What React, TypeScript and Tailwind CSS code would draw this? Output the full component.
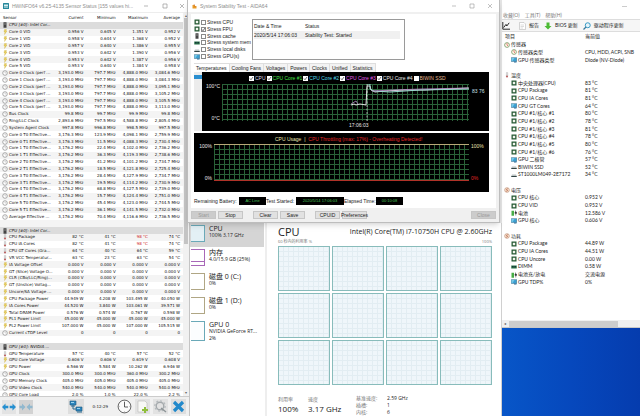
import type { ReactNode } from "react";

type SensorRow = [kind: string, name: string, current?: string, min?: string, max?: string, avg?: string];

const sensors: SensorRow[] = [
  ["group", "CPU [#0]: Intel Cor..."],
  ["volt", "Core 0 VID", "0.956 V", "0.645 V", "1.351 V", "0.952 V"],
  ["volt", "Core 1 VID", "0.958 V", "0.644 V", "1.368 V", "0.952 V"],
  ["volt", "Core 2 VID", "0.957 V", "0.640 V", "1.386 V", "0.955 V"],
  ["volt", "Core 3 VID", "0.953 V", "0.642 V", "1.390 V", "0.956 V"],
  ["volt", "Core 4 VID", "0.953 V", "0.642 V", "1.387 V", "0.956 V"],
  ["volt", "Core 5 VID", "0.953 V", "0.640 V", "1.384 V", "0.958 V"],
  ["clock", "Core 0 Clock (perf ...", "3,193.0 MHz", "797.7 MHz", "4,888.0 MHz", "3,084.6 MHz"],
  ["clock", "Core 1 Clock (perf ...", "3,193.0 MHz", "797.7 MHz", "4,888.0 MHz", "3,084.3 MHz"],
  ["clock", "Core 2 Clock (perf ...", "3,193.0 MHz", "797.7 MHz", "4,888.0 MHz", "3,095.1 MHz"],
  ["clock", "Core 3 Clock (perf ...", "3,193.0 MHz", "797.7 MHz", "4,888.0 MHz", "3,105.2 MHz"],
  ["clock", "Core 4 Clock (perf ...", "3,193.0 MHz", "797.7 MHz", "4,888.0 MHz", "3,105.5 MHz"],
  ["clock", "Core 5 Clock (perf ...", "3,193.0 MHz", "797.7 MHz", "4,888.0 MHz", "3,113.0 MHz"],
  ["clock", "Bus Clock", "99.8 MHz", "99.7 MHz", "99.9 MHz", "99.8 MHz"],
  ["clock", "Ring/LLC Clock", "2,893.6 MHz", "797.5 MHz", "4,588.8 MHz", "2,805.4 MHz"],
  ["clock", "System Agent Clock", "997.8 MHz", "996.8 MHz", "998.5 MHz", "997.5 MHz"],
  ["clock", "Core 0 T0 Effective...", "3,176.3 MHz", "123.9 MHz", "4,098.1 MHz", "2,759.9 MHz"],
  ["clock", "Core 0 T1 Effective...", "3,176.3 MHz", "11.5 MHz", "4,088.3 MHz", "2,730.4 MHz"],
  ["clock", "Core 1 T0 Effective...", "3,176.2 MHz", "22.4 MHz", "4,102.0 MHz", "2,736.2 MHz"],
  ["clock", "Core 1 T1 Effective...", "3,176.2 MHz", "36.3 MHz", "4,119.3 MHz", "2,738.6 MHz"],
  ["clock", "Core 2 T0 Effective...", "3,176.2 MHz", "41.2 MHz", "4,101.2 MHz", "2,734.7 MHz"],
  ["clock", "Core 2 T1 Effective...", "3,176.2 MHz", "18.5 MHz", "4,121.8 MHz", "2,725.4 MHz"],
  ["clock", "Core 3 T0 Effective...", "3,176.2 MHz", "28.4 MHz", "4,127.9 MHz", "2,734.7 MHz"],
  ["clock", "Core 3 T1 Effective...", "3,176.2 MHz", "19.5 MHz", "4,114.2 MHz", "2,730.9 MHz"],
  ["clock", "Core 4 T0 Effective...", "3,176.2 MHz", "68.8 MHz", "4,127.5 MHz", "2,739.0 MHz"],
  ["clock", "Core 4 T1 Effective...", "3,176.2 MHz", "15.7 MHz", "4,124.4 MHz", "2,751.0 MHz"],
  ["clock", "Core 5 T0 Effective...", "3,176.2 MHz", "45.4 MHz", "4,123.0 MHz", "2,744.5 MHz"],
  ["clock", "Core 5 T1 Effective...", "3,176.2 MHz", "36.1 MHz", "4,141.5 MHz", "2,732.0 MHz"],
  ["clock", "Average Effective ...", "3,176.2 MHz", "70.4 MHz", "4,116.6 MHz", "2,736.5 MHz"],
  ["blank", ""],
  ["group", "CPU [#0]: Intel Cor..."],
  ["temp", "CPU Package", "82 °C", "41 °C", "98 °C", "74 °C"],
  ["temp", "CPU IA Cores", "82 °C", "41 °C", "98 °C", "74 °C"],
  ["temp", "CPU GT Cores (Gra...", "64 °C", "40 °C", "64 °C", "59 °C"],
  ["temp", "VR VCC Temperatur...", "63 °C", "23 °C", "63 °C", "54 °C"],
  ["volt", "IA Voltage Offset", "0.000 V", "0.000 V", "0.000 V", "0.000 V"],
  ["volt", "GT (Slice) Voltage O...", "0.000 V", "0.000 V", "0.000 V", "0.000 V"],
  ["volt", "CLR (CBo/LLC/Ring)...", "0.000 V", "0.000 V", "0.000 V", "0.000 V"],
  ["volt", "GT (Unslice) Voltag...", "0.000 V", "0.000 V", "0.000 V", "0.000 V"],
  ["volt", "Uncore/SA Voltage ...", "0.000 V", "0.000 V", "0.000 V", "0.000 V"],
  ["volt", "CPU Package Power", "44.949 W", "4.208 W", "103.495 W", "40.050 W"],
  ["volt", "IA Cores Power", "44.520 W", "3.840 W", "103.061 W", "39.571 W"],
  ["volt", "Total DRAM Power", "0.576 W", "0.574 W", "0.767 W", "0.598 W"],
  ["volt", "PL1 Power Limit", "45.000 W", "45.000 W", "45.000 W", "45.000 W"],
  ["volt", "PL2 Power Limit", "107.000 W", "45.000 W", "107.000 W", "105.515 W"],
  ["clock", "Current cTDP Level", "0", "0", "0", "0"],
  ["blank", ""],
  ["group", "GPU [#0]: NVIDIA ..."],
  ["temp", "GPU Temperature", "57 °C", "40 °C", "57 °C", "52 °C"],
  ["volt", "GPU Core Voltage", "0.606 V", "0.606 V", "0.619 V", "0.608 V"],
  ["volt", "GPU Power", "6.566 W", "5.584 W", "10.262 W", "6.946 W"],
  ["clock", "GPU Clock", "300.0 MHz", "300.0 MHz", "360.0 MHz", "300.2 MHz"],
  ["clock", "GPU Memory Clock", "405.0 MHz", "405.0 MHz", "405.0 MHz", "405.0 MHz"],
  ["clock", "GPU Video Clock", "540.0 MHz", "540.0 MHz", "540.0 MHz", "540.0 MHz"],
  ["clock", "GPU Core Load", "2.0 %", "1.0 %", "22.0 %", "2.2 %"],
];

type TreeRow = [icon: string, name: string, value?: string];

const tree: TreeRow[] = [
  ["gauge-root", "传感器"],
  ["gauge", "传感器类型", "CPU, HDD, ACPI, SNB"],
  ["screen", "GPU 传感器类型", "Diode  (NV-Diode)"],
  ["blank", ""],
  ["temp-root", "温度"],
  ["chip", "中央处理器(CPU)", "83 °C"],
  ["chip", "CPU Package", "81 °C"],
  ["chip", "CPU IA Cores", "81 °C"],
  ["screen", "CPU GT Cores", "64 °C"],
  ["chip", "CPU #1/核心 #1", "80 °C"],
  ["chip", "CPU #1/核心 #2", "78 °C"],
  ["chip", "CPU #1/核心 #3", "81 °C"],
  ["chip", "CPU #1/核心 #4", "78 °C"],
  ["chip", "CPU #1/核心 #5", "80 °C"],
  ["chip", "CPU #1/核心 #6", "76 °C"],
  ["screen", "GPU 二极管", "57 °C"],
  ["disk", "BIWIN SSD", "52 °C"],
  ["disk", "ST1000LM049-2E7172", "34 °C"],
  ["blank", ""],
  ["volt-root", "电压"],
  ["chip", "CPU 核心", "0.952 V"],
  ["chip", "CPU VID", "0.952 V"],
  ["battery", "电池", "12.586 V"],
  ["screen", "GPU 核心", "0.606 V"],
  ["blank", ""],
  ["volt-root", "功耗"],
  ["chip", "CPU Package", "44.89 W"],
  ["chip", "CPU IA Cores", "44.51 W"],
  ["chip", "CPU Uncore", "0.00 W"],
  ["dimm", "DIMM", "0.58 W"],
  ["battery", "电池充/放电", "交流电源"],
  ["screen", "GPU TDP%", "0%"],
];

function Icon({ kind, className = "w-[6px] h-[6px]" }: { kind: string; className?: string }) {
  const shapes: Record<string, ReactNode> = {
    volt: <path d="M5 1h4L8 4h2L5 11l1-5H4z" fill="#e8cf62" stroke="#c9aa3c" strokeWidth="0.6" />,
    clock: (
      <>
        <circle cx="6" cy="6" r="4.6" fill="#fff" stroke="#777" strokeWidth="1.2" />
        <path d="M6 3v3h2.4" fill="none" stroke="#999" strokeWidth="0.8" />
      </>
    ),
    temp: (
      <>
        <rect x="4.7" y="0.5" width="2.8" height="8" rx="1.3" fill="#ddd" stroke="#999" strokeWidth="0.6" />
        <circle cx="6" cy="9" r="2.2" fill="#b66" />
      </>
    ),
    group: (
      <>
        <rect x="3" y="0.5" width="6" height="11" fill="#444" />
        <path d="M4 3h4M4 5h4" stroke="#999" strokeWidth="0.8" />
      </>
    ),
    gauge: (
      <>
        <circle cx="6" cy="6" r="4.8" fill="#fffbe8" stroke="#685" strokeWidth="1.4" />
        <path d="M6 6V2.4M6 6l2 2" stroke="#c33" strokeWidth="1.2" />
      </>
    ),
    screen: (
      <>
        <rect x="0.5" y="1.5" width="11" height="7.5" fill="#3b9fd1" stroke="#48788f" />
        <path d="M1 2h6L3 8H1z" fill="#78c9e8" />
        <path d="M6 9h5v2H6z" fill="#246a9b" />
      </>
    ),
    chip: (
      <>
        <rect x="1" y="1" width="10" height="10" fill="#285c36" />
        <rect x="3.6" y="3.6" width="4.8" height="4.8" fill="#f2f6ee" />
      </>
    ),
    disk: (
      <>
        <path d="M2 5h8l1.5 3H.5z" fill="#bcc4c4" />
        <path d="M.5 8h11v2H.5z" fill="#344" />
      </>
    ),
    dimm: (
      <>
        <path d="M.5 3h11v6H.5z" fill="#297349" />
        <path d="M2 4.5h2v2H2zm3 0h2v2H5zm3 0h2v2H8z" fill="#123" />
      </>
    ),
    battery: (
      <>
        <rect x="1" y="1.5" width="5" height="10" fill="#47ad45" />
        <path d="M9 1v3M8 4h3v3H8zM9.5 7v4" stroke="#333" fill="#333" />
      </>
    ),
    power: (
      <>
        <circle cx="6" cy="6" r="4.7" fill="#fbe6d4" stroke="#a66b4a" />
        <path d="M7 2.5L4.5 6h3L5 9.5" fill="none" stroke="#a04020" />
      </>
    ),
  };
  return (
    <svg className={`${className} shrink-0`} viewBox="0 0 12 12" aria-hidden="true">
      {shapes[kind]}
    </svg>
  );
}

function Check({ id, checked, light }: { id: string; checked?: boolean; light?: boolean }) {
  return (
    <span className="relative block w-[5px] h-[5px] shrink-0">
      <input
        id={id}
        type="checkbox"
        defaultChecked={checked}
        className={`peer appearance-none block w-[5px] h-[5px] bg-white border ${light ? "border-white" : "border-[#8a8a8a]"}`}
      />
      <svg className="absolute inset-0 hidden peer-checked:block pointer-events-none" viewBox="0 0 10 10">
        <path d="M2 5l2 2.5L8 2" fill="none" stroke="#333" strokeWidth="1.4" />
      </svg>
    </span>
  );
}

function SensorWindow() {
  return (
    <section className="flex flex-col min-w-0 h-full bg-white border-r border-[#c4c4c4] overflow-hidden">
      <header className="h-[12px] shrink-0 flex items-center pl-[3px] pr-1 gap-[3px] text-[5px] leading-none text-[#909090]">
        <svg className="w-[6px] h-[6px] shrink-0" viewBox="0 0 12 12">
          <rect width="12" height="12" rx="1" fill="#27879b" />
          <path d="M2 3h8v4H2z" fill="#d9f0f2" />
          <path d="M2 9h8" stroke="#b8dce2" strokeWidth="1.4" />
        </svg>
        <h1 className="whitespace-nowrap">HWiNFO64 v6.25-4135 Sensor Status [155 values hi...</h1>
        <svg className="ml-auto w-[42px] h-[6px] shrink-0" viewBox="0 0 42 6">
          <path d="M1 3h4M20 1h4v4h-4zM37 1l4 4M41 1l-4 4" fill="none" stroke="#999" strokeWidth="0.7" />
        </svg>
      </header>
      <div className="h-[384px] shrink-0 flex border-t border-[#ededed] overflow-hidden">
        <table className="block flex-1 min-w-0 font-['DejaVu_Sans'] text-[4px] leading-none text-[#111]">
          <thead className="block">
            <tr className="grid grid-cols-[53fr_30fr_32fr_32fr_32fr_3fr] h-[9px] items-center">
              <th className="font-normal text-left pl-[3px]">Sensor</th>
              <th className="font-normal text-right">Current</th>
              <th className="font-normal text-right">Minimum</th>
              <th className="font-normal text-right">Maximum</th>
              <th className="font-normal text-right">Average</th>
            </tr>
          </thead>
          <tbody className="grid auto-rows-fr h-[376px]">
            {sensors.map(([kind, name, ...values], i) => (
              <tr
                key={i}
                className={`grid grid-cols-[53fr_30fr_32fr_32fr_32fr_3fr] items-center min-h-0 ${
                  kind === "group" ? "bg-[#dcdcdc] italic" : i % 2 === 1 ? "bg-[#f4f4f4]" : ""
                }`}
              >
                <td className="flex items-center gap-px pl-[2px] whitespace-nowrap">
                  <Icon kind={kind} />
                  {name}
                </td>
                {values.map((value, v) => (
                  <td key={v} className={`text-right whitespace-nowrap ${value === "98 °C" ? "text-[#d01818]" : ""}`}>
                    {value}
                  </td>
                ))}
              </tr>
            ))}
          </tbody>
        </table>
        <div className="w-[6px] shrink-0 bg-[#f1f1f1] flex flex-col items-center text-[4px] leading-none text-[#666] py-px">
          <span>▴</span>
          <span className="w-[4px] h-[226px] bg-[#c4c4c4]" />
          <span className="mt-auto">▾</span>
        </div>
      </div>
      <footer className="flex-1 flex items-center bg-[#f0f0f0] border-t border-[#ccc] pl-[2px] pr-[3px] gap-[3px]">
        <button aria-label="Expand" className="w-[14px] h-[14px] bg-[#e3e3e3]">
          <svg viewBox="0 0 14 14">
            <path d="M0 7l3.5-3.5v2.3h2.8v2.4H3.5v2.3zM14 7l-3.5-3.5v2.3H7.7v2.4h2.8v2.3z" fill="#258fd0" />
          </svg>
        </button>
        <button aria-label="Collapse" className="w-[14px] h-[14px] bg-[#d2d2d2]">
          <svg viewBox="0 0 14 14">
            <path d="M6.5 7L3 3.5v2.3H.5v2.4H3v2.3zM7.5 7L11 3.5v2.3h2.5v2.4H11v2.3z" fill="#91b8ce" />
          </svg>
        </button>
        <button aria-label="Network" className="ml-auto w-[16px] h-[15px] bg-[#dedede]">
          <svg viewBox="0 0 16 15">
            <path d="M2 2h6v4H2zM8 8h6v4H8z" fill="#2d86bf" stroke="#1b587d" strokeWidth="0.6" />
            <path d="M5 6v4h3M3 7h4M9 13h5" stroke="#286890" fill="none" />
            <path d="M3 3h3v1H3zM9 9h3v1H9z" fill="#9bd4ef" />
          </svg>
        </button>
        <time className="mx-[6px] font-['DejaVu_Sans'] text-[4px] leading-none text-[#222]">0:12:29</time>
        <button aria-label="Reset clock" className="w-[15px] h-[15px]">
          <svg viewBox="0 0 15 15">
            <circle cx="7.5" cy="7.5" r="6.4" fill="#fafafa" stroke="#555" strokeWidth="0.9" />
            <path d="M7.5 3v5H11" fill="none" stroke="#333" strokeWidth="0.8" />
            <path d="M7.5 1.5v1M7.5 12.5v1M1.5 7.5h1M12.5 7.5h1" stroke="#777" strokeWidth="0.7" />
          </svg>
        </button>
        <button aria-label="Log" className="w-[15px] h-[15px] bg-[#e2e2e2]">
          <svg viewBox="0 0 15 15">
            <path d="M3 2h7l2 2v9H3z" fill="#f8f8f6" stroke="#b8b8b8" strokeWidth="0.6" />
            <path d="M9 8h2v2h2v2h-2v2H9v-2H7v-2h2z" fill="#8fbe3c" />
          </svg>
        </button>
        <button aria-label="Settings" className="w-[15px] h-[15px] bg-[#e2e2e2]">
          <svg viewBox="0 0 15 15">
            <circle cx="7" cy="7" r="3.8" fill="none" stroke="#a4a9ac" strokeWidth="1.4" />
            <circle cx="7" cy="7" r="5.2" fill="none" stroke="#b4b9bc" strokeWidth="1.2" strokeDasharray="2 2" />
            <path d="M8 9l5 4" stroke="#8d9497" strokeWidth="1.4" />
          </svg>
        </button>
        <button aria-label="Close sensors" className="w-[15px] h-[15px] bg-[#dedede]">
          <svg viewBox="0 0 15 15">
            <path d="M3 3l9 9M12 3l-9 9" stroke="#2289cb" strokeWidth="3.2" />
          </svg>
        </button>
      </footer>
    </section>
  );
}

const stressTests: [string, string, boolean][] = [
  ["chip", "Stress CPU", false],
  ["chip", "Stress FPU", true],
  ["group", "Stress cache", false],
  ["dimm", "Stress system mem", false],
  ["disk", "Stress local disks", false],
  ["screen", "Stress GPU(s)", false],
];

const legend: [string, string, boolean][] = [
  ["CPU", "text-[#d8d8e8]", true],
  ["CPU Core #1", "text-[#48e048]", true],
  ["CPU Core #2", "text-[#50d8e8]", true],
  ["CPU Core #3", "text-[#e058e8]", true],
  ["CPU Core #4", "text-[#e8e8e8]", true],
  ["BIWIN SSD", "text-[#e0b890]", false],
];

function PlotGrid({ id }: { id: string }) {
  return (
    <>
      <defs>
        <pattern id={id} width="5" height="5" patternUnits="userSpaceOnUse">
          <path d="M0 .5h5M.5 0v5" stroke="#2a6238" strokeWidth="1" />
        </pattern>
      </defs>
      <rect width="100%" height="100%" fill={`url(#${id})`} />
    </>
  );
}

function StabilityWindow() {
  const button = "w-[25px] h-[8px] border border-[#c6c6c6] flex items-center justify-center";
  const readout = "h-[8px] bg-black text-[#48c058] text-[4px] flex items-center justify-center";
  return (
    <section className="relative z-10 -ml-[3px] mr-[2px] h-[223px] shrink-0 flex flex-col bg-[#f0f0f0] border-x border-b border-[#bdbdbd] shadow-md text-[5px] leading-none text-[#1c1c1c]">
      <header className="h-[12px] shrink-0 flex items-center bg-white pl-[4px] pr-[6px] gap-[3px] text-[#8c8c8c]">
        <svg className="w-[5px] h-[5px]" viewBox="0 0 10 10">
          <path d="M1 2h4l1 2h3v5H1z" fill="#e89b28" />
          <path d="M4 0l2 6" stroke="#c65f1c" />
        </svg>
        <h2>System Stability Test - AIDA64</h2>
        <svg className="ml-auto w-[42px] h-[6px]" viewBox="0 0 42 6">
          <path d="M1 3h4M19 1h4v4h-4zM37 1l4 4M41 1l-4 4" fill="none" stroke="#999" strokeWidth="0.6" />
        </svg>
      </header>
      <div className="flex-1 min-h-0 mx-[3px] mt-[2px] px-[3px] pt-[5px] bg-white flex flex-col">
        <div className="flex h-[41px] shrink-0">
          <ul className="w-[58px] shrink-0 grid auto-rows-fr">
            {stressTests.map(([icon, label, on]) => (
              <li key={label} className="flex items-center gap-px whitespace-nowrap min-h-0">
                <Icon kind={icon} />
                <Check id={label} checked={on} />
                <label htmlFor={label}>{label}</label>
              </li>
            ))}
          </ul>
          <div className="w-[153px] border border-[#9a9a9a] px-px pt-[2px]">
            <table className="w-[146px] table-fixed">
              <thead>
                <tr className="h-[9px]">
                  <th className="w-[51px] font-normal text-left">Date &amp; Time</th>
                  <th className="font-normal text-left">Status</th>
                </tr>
              </thead>
              <tbody>
                <tr className="h-[8px] bg-[#f0f0f0]">
                  <td>2020/5/14 17:06:03</td>
                  <td>Stability Test: Started</td>
                </tr>
              </tbody>
            </table>
          </div>
        </div>
        <nav className="mt-[3px] h-[9px] shrink-0 flex items-stretch">
          {["Temperatures", "Cooling Fans", "Voltages", "Powers", "Clocks", "Unified", "Statistics"].map((tab, i) => (
            <button key={tab} className={`px-[2px] border-r border-t border-[#dedede] ${i === 0 ? "bg-white" : "bg-[#f3f3f3]"}`}>
              {tab}
            </button>
          ))}
        </nav>
        <div className="flex h-[59px] shrink-0 mr-[4px]">
          <div className="w-[8px] shrink-0 bg-[#ececec] pt-[3px]">
            <div className="h-[4px] bg-[#2b8fd0]" />
          </div>
          <div className="flex-1 min-w-0 bg-black text-[#e8e8e8] flex flex-col pt-[3px]">
            <div className="flex items-center gap-px pl-[47px] h-[6px]">
              {legend.map(([name, color, on]) => (
                <span key={name} className={`flex items-center gap-px whitespace-nowrap ${color}`}>
                  <Check id={`plot ${name}`} checked={on} light />
                  <label htmlFor={`plot ${name}`}>{name}</label>
                </span>
              ))}
            </div>
            <div className="flex mt-[3px] h-[37px]">
              <div className="w-[20px] pr-[2px] flex flex-col justify-between text-right">
                <span>100°C</span>
                <span>0°C</span>
              </div>
              <svg className="flex-1 h-full" viewBox="0 0 247 37" preserveAspectRatio="none">
                <PlotGrid id="temp-grid" />
                <path d="M145 0v37" stroke="#ddd" strokeWidth="0.7" strokeDasharray="2 1.5" />
                <path d="M129 21l3-1 2 1 4-1 6 1 1-19 3 0 1 4 4 2 10-1 20-1 20 0 20-1 24-1" fill="none" stroke="#e0e0e0" strokeWidth="1" />
                <path d="M145 0h3v5l4 2 16 1 30-2 49-1" fill="none" stroke="#9adad0" strokeWidth="1" />
                <path d="M129 20l5-3 2 3M150 7l20-1 30-1 46-1" fill="none" stroke="#b88ac8" strokeWidth="0.8" />
              </svg>
              <span className="w-[20px] pl-[3px] pt-[5px] text-[#c8e0e8] whitespace-nowrap">83 76</span>
            </div>
            <span className="pl-[147px] pt-[2px]">17:06:03</span>
          </div>
        </div>
        <div className="mt-[2px] mr-[4px] h-[59px] shrink-0 bg-black text-[#e8e8e8] flex flex-col">
          <p className="pt-[4px] pl-[81px] h-[11px] whitespace-nowrap text-[#e8e4b0]">
            CPU Usage &nbsp;|&nbsp; <span className="text-[#e02828]">CPU Throttling (max: 17%) - Overheating Detected!</span>
          </p>
          <div className="flex h-[37px]">
            <div className="w-[20px] pr-[2px] flex flex-col justify-between text-right">
              <span>100%</span>
              <span>0%</span>
            </div>
            <svg className="flex-1 h-full" viewBox="0 0 255 37" preserveAspectRatio="none">
              <PlotGrid id="usage-grid" />
              <path d="M0 .5h255" stroke="#b8a878" />
              <path d="M0 36.5h255" stroke="#b03228" />
            </svg>
            <div className="w-[20px] pl-[2px] flex flex-col justify-between">
              <span className="text-[#e8e4b0]">100%</span>
              <span className="text-[#e02828]">0%</span>
            </div>
          </div>
        </div>
        <dl className="mt-[5px] flex items-center whitespace-nowrap">
          <dt className="w-[45px]">Remaining Battery:</dt>
          <dd className={`w-[27px] ${readout}`}>AC Line</dd>
          <dt className="w-[30px]">Test Started:</dt>
          <dd className={`w-[48px] ${readout}`}>2020/5/14 17:06:03</dd>
          <dt className="w-[32px]">Elapsed Time:</dt>
          <dd className={`w-[27px] ${readout}`}>00:10:08</dd>
        </dl>
      </div>
      <footer className="h-[14px] shrink-0 flex items-center gap-[2px] px-[3px]">
        <button disabled className={`${button} bg-[#cccccc] text-[#999]`}>Start</button>
        <button className={`${button} bg-[#e1e1e1]`}>Stop</button>
        <button className={`${button} bg-[#e1e1e1] ml-[8px]`}>Clear</button>
        <button className={`${button} bg-[#e1e1e1]`}>Save</button>
        <button className={`${button} bg-[#e1e1e1] ml-[8px]`}>CPUID</button>
        <button className={`${button} bg-[#e1e1e1]`}>Preferences</button>
        <button disabled className={`${button} ml-auto bg-[#cccccc] text-[#999]`}>Close</button>
      </footer>
    </section>
  );
}

const resources: { name: string; detail: string[]; border: string; fill: string }[] = [
  { name: "CPU", detail: ["100% 3.17 GHz"], border: "border-[#6aa9b8]", fill: "bg-[#e3f0f5]" },
  { name: "内存", detail: ["4.0/15.9 GB (25%)"], border: "border-[#a868b8]", fill: "bg-white" },
  { name: "磁盘 0 (C:)", detail: ["0%"], border: "border-[#b0a684]", fill: "bg-white" },
  { name: "磁盘 1 (D:)", detail: ["0%"], border: "border-[#b0a684]", fill: "bg-white" },
  { name: "GPU 0", detail: ["NVIDIA GeForce RT...", "2%"], border: "border-[#6aa9b8]", fill: "bg-[#fbfdfe]" },
];

function TaskManager() {
  return (
    <section className="flex-1 min-h-0 flex bg-white overflow-hidden font-['Open_Sans','Noto_Sans_CJK_SC',sans-serif] text-[#222] border-r border-[#d0d0d0]">
      <ul className="w-[77px] shrink-0 border-r-2 border-[#eeeeee]">
        {resources.map((item, i) => (
          <li key={item.name} className={`flex gap-[4px] h-[24px] pt-[2px] pl-px mr-px ${i === 0 ? "bg-[#d5d5d5]" : ""}`}>
            <span
              className={`w-[14px] shrink-0 border border-l-0 flex flex-col justify-end ${item.border} ${item.fill} ${
                item.detail.length > 1 ? "h-[20px]" : "h-[17px]"
              }`}
            >
              {i === 1 && <span className="h-[4px] border-t border-[#a868b8]" />}
            </span>
            <span className="min-w-0 text-[5px] leading-[7px] whitespace-nowrap">
              <b className="block font-normal text-[7px] leading-[7px]">{item.name}</b>
              {item.detail.map((line) => (
                <span key={line} className="block">{line}</span>
              ))}
            </span>
          </li>
        ))}
      </ul>
      <div className="flex-1 min-w-0 pl-[11px] pr-[9px] pt-[2px]">
        <div className="flex justify-between items-center h-[13px]">
          <h2 className="text-[11px] leading-none">CPU</h2>
          <span className="text-[7px] leading-none">Intel(R) Core(TM) i7-10750H CPU @ 2.60GHz</span>
        </div>
        <div className="flex justify-between items-center h-[8px] text-[4px] leading-none text-[#777]">
          <span>60 秒内的利用率 %</span>
          <span>100%</span>
        </div>
        <div className="grid grid-cols-4 gap-x-[2px] gap-y-[2px]">
          {Array.from({ length: 12 }, (_, i) => (
            <svg key={i} className="w-full h-[45px] bg-[#eff6fa] border border-[#88bcbb]" preserveAspectRatio="none">
              <defs>
                <pattern id={`core-${i}`} width="5" height="5" patternUnits="userSpaceOnUse">
                  <path d="M0 4.5h5M4.5 0v5" stroke="#e2edf2" strokeWidth="1" />
                </pattern>
              </defs>
              <rect width="100%" height="100%" fill={`url(#core-${i})`} />
            </svg>
          ))}
        </div>
        <div className="mt-[10px] flex">
          <dl className="w-[30px]">
            <dt className="text-[5px] leading-[8px] text-[#777]">利用率</dt>
            <dd className="text-[8px] leading-[11px]">100%</dd>
          </dl>
          <dl className="w-[48px]">
            <dt className="text-[5px] leading-[8px] text-[#777]">速度</dt>
            <dd className="text-[8px] leading-[11px]">3.17 GHz</dd>
          </dl>
          <dl className="grid grid-cols-[31px_auto] text-[5px] leading-[7px] content-start">
            <dt className="text-[#777]">基准速度:</dt>
            <dd>2.59 GHz</dd>
            <dt className="text-[#777]">插槽:</dt>
            <dd>1</dd>
            <dt className="text-[#777]">内核:</dt>
            <dd>6</dd>
          </dl>
        </div>
      </div>
    </section>
  );
}

const rootIcons: Record<string, string> = { "gauge-root": "gauge", "temp-root": "temp", "volt-root": "power" };

function AidaWindow() {
  return (
    <section className="h-[328px] shrink-0 flex flex-col bg-white border-b border-[#c8c8c8] overflow-hidden font-['Lato','Noto_Sans_CJK_SC',sans-serif] text-[5px] leading-none text-[#1c1c1c]">
      <header className="h-[12px] shrink-0 flex items-center justify-end pr-[13px]">
        <svg className="w-[5px] h-[5px]" viewBox="0 0 5 5">
          <path d="M0 2.5h5" stroke="#aaa" strokeWidth="0.6" />
        </svg>
      </header>
      <nav className="h-[7px] shrink-0 flex items-center gap-[5px] pl-px text-[#777]">
        <button>收藏(O)</button>
        <button>工具(T)</button>
        <button>帮助(H)</button>
      </nav>
      <div className="h-[13px] shrink-0 flex items-center bg-[#f6f6f6] border-y border-[#dddddd] whitespace-nowrap">
        <button aria-label="Chart" className="w-[8px] h-[8px] mr-[9px]">
          <svg viewBox="0 0 10 10">
            <path d="M1 0v9h9M2 7l3-4 1 2 3-4" fill="none" stroke="#222" strokeWidth="1.2" />
          </svg>
        </button>
        <button className="flex items-center gap-[3px] mr-[5px]">
          <svg className="w-[7px] h-[8px]" viewBox="0 0 14 16">
            <path d="M1 1h9l3 3v11H1z" fill="#fff" stroke="#aaa" />
            <path d="M3 6h7M3 9h7M3 12h5" stroke="#bbb" />
          </svg>
          报告
        </button>
        <button className="flex items-center gap-[3px] mr-[5px]">
          <svg className="w-[8px] h-[8px]" viewBox="0 0 16 16">
            <path d="M5 1h6v7h4l-7 7-7-7h4z" fill="#4dbb35" />
          </svg>
          BIOS 更新
        </button>
        <button className="flex items-center gap-[3px]">
          <svg className="w-[8px] h-[8px]" viewBox="0 0 16 16">
            <circle cx="9.5" cy="6.5" r="5" fill="#e4f4fa" stroke="#3a99c4" strokeWidth="2" />
            <path d="M6 10l-5 5" stroke="#3a7a9c" strokeWidth="2.4" />
          </svg>
          驱动程序更新
        </button>
      </div>
      <table className="block">
        <thead className="block">
          <tr className="grid grid-cols-[83fr_55fr] h-[9px] items-center">
            <th className="font-normal text-left pl-[3px]">项目</th>
            <th className="font-normal text-left">当前值</th>
          </tr>
        </thead>
        <tbody className="grid auto-rows-fr h-[245px]">
          {tree.map(([icon, name, value], i) => (
            <tr key={i} className="grid grid-cols-[83fr_55fr] items-center min-h-0 whitespace-nowrap">
              <td className={`flex items-center gap-px ${rootIcons[icon] ? "pl-[2px]" : "pl-[9px]"}`}>
                <Icon kind={rootIcons[icon] ?? icon} />
                {name}
              </td>
              <td>{value}</td>
            </tr>
          ))}
        </tbody>
      </table>
      <div className="mt-auto h-[7px] shrink-0 bg-[#f0f0f0] flex items-center pl-[2px] gap-[3px] text-[4px] text-[#555]">
        <span>◂</span>
        <span className="w-4/5 h-[6px] bg-[#cdcdcd]" />
      </div>
    </section>
  );
}

export default function App() {
  return (
    <main className="h-screen overflow-hidden grid grid-cols-[190fr_312fr_138fr] grid-rows-1 bg-[#0646ba] font-['Liberation_Sans','Noto_Sans_CJK_SC',sans-serif]">
      <SensorWindow />
      <div className="flex flex-col min-w-0 min-h-0 bg-[#e4e4e4]">
        <StabilityWindow />
        <TaskManager />
      </div>
      <div className="flex flex-col min-w-0 min-h-0 bg-linear-to-r from-[#0856c8] via-[#0648bd] to-[#053cae]">
        <AidaWindow />
      </div>
    </main>
  );
}
